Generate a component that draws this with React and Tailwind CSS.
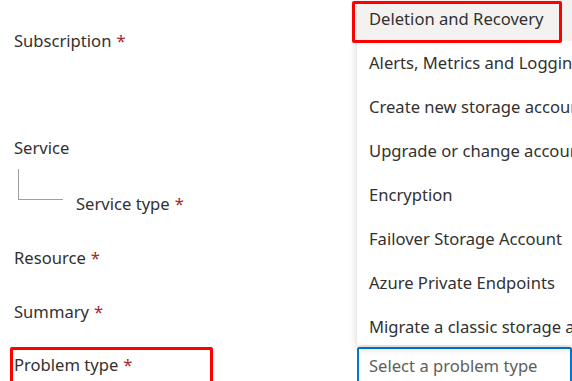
import React from 'react';

const problemTypes = [
  'Deletion and Recovery',
  'Alerts, Metrics and Logging',
  'Create new storage account',
  'Upgrade or change account type',
  'Encryption',
  'Failover Storage Account',
  'Azure Private Endpoints',
  'Migrate a classic storage account',
];

const Required = () => <span className="ml-[5px] text-[#a4262c]">*</span>;

const App = () => {
  return (
    <div
      className="relative flex w-[572px] h-[381px] overflow-hidden bg-white text-[16.6px] text-[#323130]"
      style={{ fontFamily: '"Noto Sans", "Open Sans", sans-serif' }}
    >
      {/* Labels */}
      <div className="w-[357px] shrink-0 pl-[14px] leading-[22px]">
        <div className="mt-[30px]">Subscription<Required /></div>
        <div className="mt-[85px]">Service</div>
        <div className="relative pl-[62px] mt-[34px]">
          <div className="absolute left-[4px] top-[-24px] w-[45px] h-[31px] border-l border-b border-[#a19f9d]" />
          Service type<Required />
        </div>
        <div className="mt-[32px]">Resource<Required /></div>
        <div className="mt-[32px]">Summary<Required /></div>
        <div className="relative mt-[31px]">
          <div className="absolute left-[-4px] top-[-7px] w-[203px] h-[40px] border-[3px] border-[#ff0000] rounded-[2px]" />
          Problem type<Required />
        </div>
      </div>

      {/* Dropdown */}
      <div className="flex flex-col flex-1 min-w-0">
        <div className="relative shrink-0 h-[345px] bg-white shadow-[0_3px_8px_rgba(0,0,0,0.18)] overflow-hidden">
          <ul className="mt-[-3px]">
            {problemTypes.map((p, i) => (
              <li
                key={p}
                className={`h-[44px] pl-[12px] flex items-center whitespace-nowrap ${i === 0 ? 'bg-[#f3f2f1]' : ''}`}
              >
                {p}
              </li>
            ))}
          </ul>
        </div>
        <div className="shrink-0 mt-[2px] h-[40px] border-2 border-[#0078d4] rounded-[2px] pl-[10px] pt-[6px] leading-[22px] text-[#605e5c] whitespace-nowrap">
          Select a problem type
        </div>
      </div>

      {/* Highlight annotation on first option */}
      <div className="absolute left-[352px] top-[1px] w-[210px] h-[42px] border-[3px] border-[#ff0000] rounded-[2px]" />
    </div>
  );
};

export default App;
